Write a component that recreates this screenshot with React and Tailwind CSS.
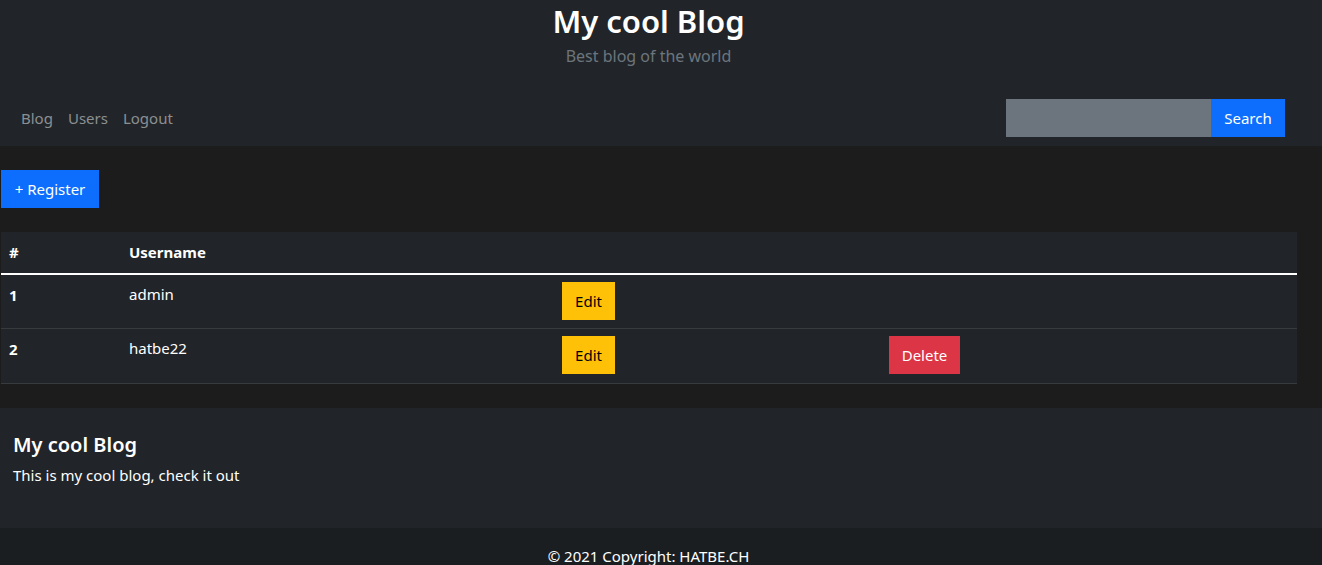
import React from 'react';

const users = [
  { id: 1, username: 'admin', canDelete: false },
  { id: 2, username: 'hatbe22', canDelete: true },
];

const App = () => {
  return (
    <div className="min-h-screen bg-[#1c1c1c] text-white text-[16px]" style={{ fontFamily: '"Noto Sans", "Open Sans", sans-serif' }}>
      {/* header */}
      <header className="bg-[#212529]">
        <div className="text-center pt-[2px] pr-[25px]">
          <h1 className="text-[31px] leading-[38px] font-semibold">My cool Blog</h1>
          <p className="text-[#6c757d] text-[16px] leading-[24px] mt-[4px]">Best blog of the world</p>
        </div>
        <nav className="flex items-center justify-between pl-[21px] pr-[37px] pt-[31px] pb-[9px]">
          <div className="flex gap-[15px] text-[#8c8f92] text-[15px]">
            <a href="#">Blog</a>
            <a href="#">Users</a>
            <a href="#">Logout</a>
          </div>
          <form className="flex" onSubmit={(e) => e.preventDefault()}>
            <input className="w-[205px] h-[38px] bg-[#6c757d] outline-none px-3" />
            <button className="h-[38px] w-[74px] bg-[#0d6efd] text-white text-[15px]">Search</button>
          </form>
        </nav>
      </header>

      {/* main */}
      <main className="pl-[1px] pr-[25px] pt-[24px] pb-[24px]">
        <button className="bg-[#0d6efd] text-white text-[15px] h-[38px] w-[98px]">+ Register</button>
        <table className="w-full mt-[24px] text-[15px] border-collapse bg-[#212529]">
          <thead>
            <tr className="border-b-2 border-white h-[42px]">
              <th className="text-left font-bold px-[8px] w-[120px]">#</th>
              <th className="text-left font-bold px-[8px] w-[433px]">Username</th>
              <th className="w-[327px]"></th>
              <th></th>
            </tr>
          </thead>
          <tbody>
            {users.map((u) => (
              <tr key={u.id} className="border-b border-[#373b3e] h-[54.5px]">
                <td className="font-bold px-[8px] align-top pt-[9px]">{u.id}</td>
                <td className="px-[8px] align-top pt-[8px]">{u.username}</td>
                <td className="px-[8px] align-top pt-[7px]">
                  <button className="bg-[#ffc107] text-black h-[38px] w-[53px]">Edit</button>
                </td>
                <td className="px-[8px] align-top pt-[7px]">
                  {u.canDelete && (
                    <button className="bg-[#dc3545] text-white h-[38px] w-[71px]">Delete</button>
                  )}
                </td>
              </tr>
            ))}
          </tbody>
        </table>
      </main>

      {/* footer */}
      <footer>
        <div className="bg-[#212529] h-[120px] px-[13px] pt-[24px]">
          <h5 className="text-[20px] font-semibold leading-[26px]">My cool Blog</h5>
          <p className="text-[15px] mt-[6px]">This is my cool blog, check it out</p>
        </div>
        <div className="bg-[#1b1e21] text-center text-[15px] pt-[17px] pb-[10px] pr-[25px]">© 2021 Copyright: HATBE.CH</div>
      </footer>
    </div>
  );
};

export default App;
